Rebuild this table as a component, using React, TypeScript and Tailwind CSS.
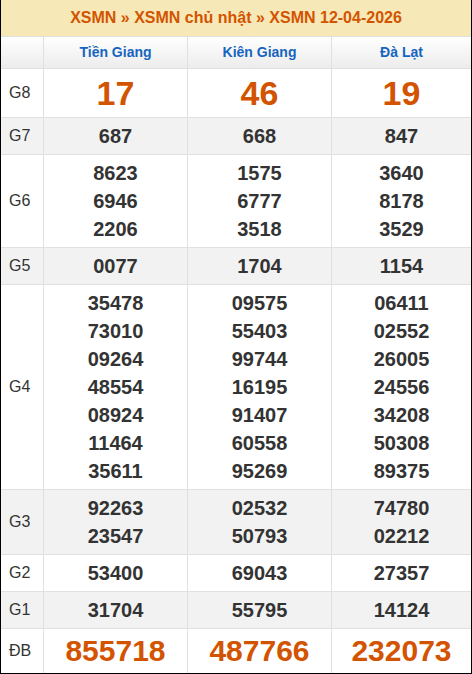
import React from 'react'

const provinces = ['Tiền Giang', 'Kiên Giang', 'Đà Lạt']

const rows: { label: string; values: string[][]; big?: 'g8' | 'db' }[] = [
  { label: 'G8', values: [['17'], ['46'], ['19']], big: 'g8' },
  { label: 'G7', values: [['687'], ['668'], ['847']] },
  { label: 'G6', values: [['8623', '6946', '2206'], ['1575', '6777', '3518'], ['3640', '8178', '3529']] },
  { label: 'G5', values: [['0077'], ['1704'], ['1154']] },
  {
    label: 'G4',
    values: [
      ['35478', '73010', '09264', '48554', '08924', '11464', '35611'],
      ['09575', '55403', '99744', '16195', '91407', '60558', '95269'],
      ['06411', '02552', '26005', '24556', '34208', '50308', '89375'],
    ],
  },
  { label: 'G3', values: [['92263', '23547'], ['02532', '50793'], ['74780', '02212']] },
  { label: 'G2', values: [['53400'], ['69043'], ['27357']] },
  { label: 'G1', values: [['31704'], ['55795'], ['14124']] },
  { label: 'ĐB', values: [['855718'], ['487766'], ['232073']], big: 'db' },
]

export default function App() {
  return (
    <div className="w-[472px] bg-white font-['Liberation_Sans',Arial,sans-serif] border-x border-b border-black">
      <div className="h-[37px] bg-[#f7e8b7] border-b border-[#e0e0e0] flex items-center justify-center text-[16px] font-bold text-[#d35400]">
        XSMN » XSMN chủ nhật » XSMN 12-04-2026
      </div>

      <div className="grid grid-cols-[42px_144px_144px_1fr] h-[32px] border-b border-[#e0e0e0] bg-gradient-to-b from-white to-[#ececec]">
        <div />
        {provinces.map((p) => (
          <div key={p} className="border-l border-[#e0e0e0] flex items-center justify-center text-[14px] font-bold text-[#1565c0]">
            {p}
          </div>
        ))}
      </div>

      {rows.map((row, i) => (
        <div
          key={row.label}
          className={
            'grid grid-cols-[42px_144px_144px_1fr] ' +
            (i % 2 === 1 ? 'bg-[#f2f2f2] ' : 'bg-white ') +
            (i < rows.length - 1 ? 'border-b border-[#e0e0e0]' : '')
          }
        >
          <div className="flex items-center pl-[8px] text-[16px] text-[#333]">{row.label}</div>
          {row.values.map((col, j) => (
            <div key={j} className="border-l border-[#e0e0e0] py-1 flex flex-col items-center">
              {col.map((n) => (
                <div
                  key={n}
                  className={
                    row.big === 'g8'
                      ? 'text-[34px] leading-[40px] font-bold text-[#d35400]'
                      : row.big === 'db'
                        ? 'text-[30px] leading-[36px] font-bold text-[#d35400]'
                        : 'text-[20px] leading-[28px] font-bold text-[#333]'
                  }
                >
                  {n}
                </div>
              ))}
            </div>
          ))}
        </div>
      ))}
    </div>
  )
}
